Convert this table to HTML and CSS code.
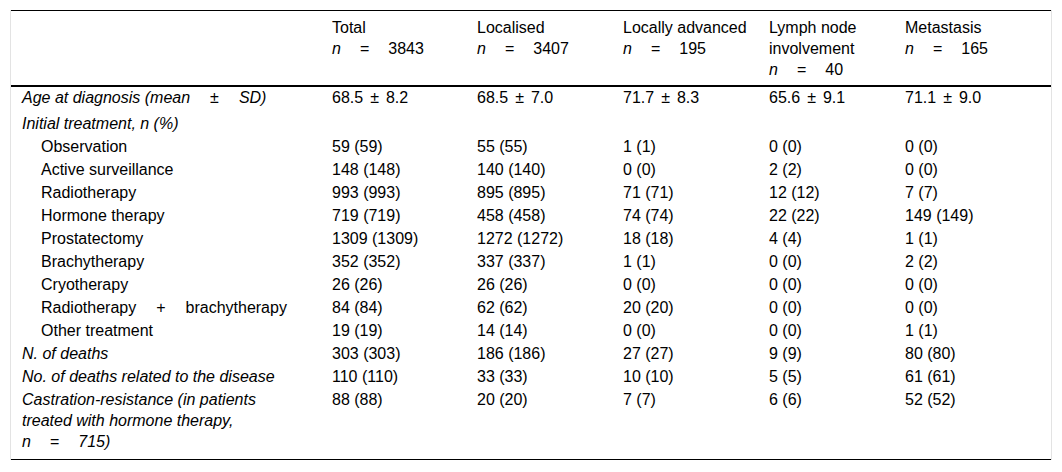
FILE: index.html
```html
<!DOCTYPE html>
<html>
<head>
<meta charset="utf-8">
<link rel="stylesheet" href="styles.css">
</head>
<body>
<div class="wrap">
<table class="tbl">
<colgroup>
<col class="c1"><col class="c2"><col class="c3"><col class="c4"><col class="c5"><col class="c6">
</colgroup>
<thead>
<tr>
<th></th>
<th>Total<br><i>n</i><span class="eq">=</span>3843</th>
<th>Localised<br><i>n</i><span class="eq">=</span>3407</th>
<th>Locally advanced<br><i>n</i><span class="eq">=</span>195</th>
<th>Lymph node<br>involvement<br><i>n</i><span class="eq">=</span>40</th>
<th>Metastasis<br><i>n</i><span class="eq">=</span>165</th>
</tr>
</thead>
<tbody>
<tr class="first">
<td class="it">Age at diagnosis (mean<span class="pm">±</span>SD)</td>
<td>68.5<span class="pmv">±</span>8.2</td>
<td>68.5<span class="pmv">±</span>7.0</td>
<td>71.7<span class="pmv">±</span>8.3</td>
<td>65.6<span class="pmv">±</span>9.1</td>
<td>71.1<span class="pmv">±</span>9.0</td>
</tr>
<tr><td class="it">Initial treatment, n (%)</td><td></td><td></td><td></td><td></td><td></td></tr>
<tr><td class="ind">Observation</td><td>59 (59)</td><td>55 (55)</td><td>1 (1)</td><td>0 (0)</td><td>0 (0)</td></tr>
<tr><td class="ind">Active surveillance</td><td>148 (148)</td><td>140 (140)</td><td>0 (0)</td><td>2 (2)</td><td>0 (0)</td></tr>
<tr><td class="ind">Radiotherapy</td><td>993 (993)</td><td>895 (895)</td><td>71 (71)</td><td>12 (12)</td><td>7 (7)</td></tr>
<tr><td class="ind">Hormone therapy</td><td>719 (719)</td><td>458 (458)</td><td>74 (74)</td><td>22 (22)</td><td>149 (149)</td></tr>
<tr><td class="ind">Prostatectomy</td><td>1309 (1309)</td><td>1272 (1272)</td><td>18 (18)</td><td>4 (4)</td><td>1 (1)</td></tr>
<tr><td class="ind">Brachytherapy</td><td>352 (352)</td><td>337 (337)</td><td>1 (1)</td><td>0 (0)</td><td>2 (2)</td></tr>
<tr><td class="ind">Cryotherapy</td><td>26 (26)</td><td>26 (26)</td><td>0 (0)</td><td>0 (0)</td><td>0 (0)</td></tr>
<tr><td class="ind">Radiotherapy<span class="plus">+</span>brachytherapy</td><td>84 (84)</td><td>62 (62)</td><td>20 (20)</td><td>0 (0)</td><td>0 (0)</td></tr>
<tr><td class="ind">Other treatment</td><td>19 (19)</td><td>14 (14)</td><td>0 (0)</td><td>0 (0)</td><td>1 (1)</td></tr>
<tr><td class="it">N. of deaths</td><td>303 (303)</td><td>186 (186)</td><td>27 (27)</td><td>9 (9)</td><td>80 (80)</td></tr>
<tr><td class="it">No. of deaths related to the disease</td><td>110 (110)</td><td>33 (33)</td><td>10 (10)</td><td>5 (5)</td><td>61 (61)</td></tr>
<tr class="last"><td class="it">Castration-resistance (in patients<br>treated with hormone therapy,<br>n<span class="eq">=</span>715)</td><td>88 (88)</td><td>20 (20)</td><td>7 (7)</td><td>6 (6)</td><td>52 (52)</td></tr>
</tbody>
</table>
</div>
</body>
</html>
```
FILE: styles.css
```css
html, body {
  margin: 0;
  padding: 0;
  background: #fff;
}
body {
  padding: 10px;
  font-family: "Liberation Sans", Arial, sans-serif;
  font-size: 16px;
  color: #000;
}
.wrap {
  width: 1040px;
  border-left: 1px solid #e3e3e3;
  border-right: 1px solid #e3e3e3;
}
.tbl {
  width: 1040px;
  table-layout: fixed;
  border-collapse: collapse;
  border-top: 1px solid #000;
  border-bottom: 1px solid #000;
}
.c1 { width: 310px; }
.c2 { width: 145px; }
.c3 { width: 146px; }
.c4 { width: 146px; }
.c5 { width: 136px; }
.c6 { width: 157px; }
th {
  font-weight: normal;
  text-align: left;
  vertical-align: top;
  line-height: 21px;
  padding: 6px 11px 5px 11px;
  border-bottom: 2px solid #000;
}
td {
  text-align: left;
  vertical-align: top;
  line-height: 21px;
  padding: 1px 11px;
}
tr.first td { padding-top: 0; padding-bottom: 4px; }
tr.last td { padding-bottom: 7px; }
.it { font-style: italic; }
.ind { padding-left: 30px; }
.eq { margin: 0 19px; font-style: normal; }
.pm { margin: 0 20px; }
.pmv { margin: 0 7px; }
.plus { margin: 0 20px; }
```
